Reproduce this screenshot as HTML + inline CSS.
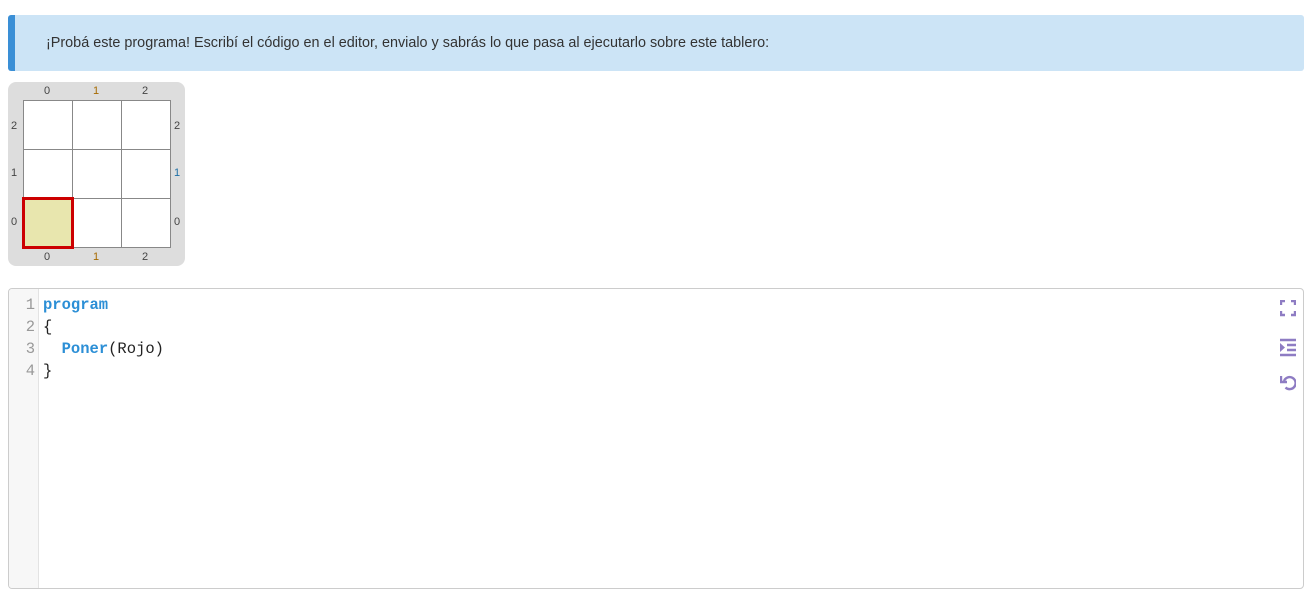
<!DOCTYPE html>
<html><head><meta charset="utf-8"><style>
body{margin:0;background:#fff;width:1314px;height:596px;position:relative;font-family:"Liberation Sans",sans-serif;overflow:hidden}
.banner{position:absolute;left:8px;top:15px;width:1289px;height:56px;background:#cce4f6;border-left:7px solid #3a8fd6;border-radius:3px}
.banner span{position:absolute;left:31px;top:20px;font-size:14.4px;color:#333}
.board{position:absolute;left:8px;top:82px;width:177px;height:184px;background:#ddd;border-radius:8px}
.grid{position:absolute;left:14px;top:18px;border-collapse:collapse}
.grid td{width:49px;height:49px;border:1px solid #888;background:#fff;padding:0;box-sizing:border-box}
.lbl{position:absolute;font-size:11px;color:#444}
.o{color:#a66a00}.b{color:#1d6fa5}
.ed{position:absolute;left:8px;top:288px;width:1294px;height:299px;border:1px solid #ccc;border-radius:4px;overflow:hidden}
.gut{position:absolute;left:0;top:0;width:29px;height:100%;background:#f7f7f7;border-right:1px solid #e3e3e3}
.code{position:absolute;top:5px;font-family:"Liberation Mono",monospace;font-size:15.5px;line-height:22px;white-space:pre}
.kw{color:#2c8fd6;font-weight:bold}
</style></head><body>
<div class="banner"><span>¡Probá este programa! Escribí el código en el editor, envialo y sabrás lo que pasa al ejecutarlo sobre este tablero:</span></div>
<div class="board">
<table class="grid">
<tr><td></td><td></td><td></td></tr>
<tr><td></td><td></td><td></td></tr>
<tr><td style="background:#e8e6ae;border:3px solid #c00"></td><td></td><td></td></tr>
</table>
<span class="lbl" style="left:36px;top:3px">0</span><span class="lbl o" style="left:85px;top:3px">1</span><span class="lbl" style="left:134px;top:3px">2</span>
<span class="lbl" style="left:36px;top:169px">0</span><span class="lbl o" style="left:85px;top:169px">1</span><span class="lbl" style="left:134px;top:169px">2</span>
<span class="lbl" style="left:3px;top:38px">2</span><span class="lbl" style="left:3px;top:85px">1</span><span class="lbl" style="left:3px;top:134px">0</span>
<span class="lbl" style="left:166px;top:38px">2</span><span class="lbl b" style="left:166px;top:85px">1</span><span class="lbl" style="left:166px;top:134px">0</span>
</div>
<div class="ed">
<div class="gut"></div>
<div class="code" style="left:0;width:26px;text-align:right;color:#999">1
2
3
4</div>
<div class="code" style="left:34px;color:#222"><span class="kw">program</span>
{
  <span class="kw">Poner</span>(Rojo)
}</div>
<svg style="position:absolute;left:1271px;top:11px" width="16" height="100" viewBox="0 0 16 100" fill="none" stroke="#8e7cc3" stroke-width="2.4">
<path d="M1 5V1h4M11 1h4v4M15 11v4h-4M5 15H1v-4"/>
<path d="M0 40h16M7 45h9M7 50h9M0 55h16" /><path d="M0 43l5 4.5-5 4.5z" fill="#8e7cc3" stroke="none"/>
<path d="M4 81a6 6 0 1 1 1.5 6.5" /><path d="M1 76v6h6" />
</svg>
</div>
</body></html>
